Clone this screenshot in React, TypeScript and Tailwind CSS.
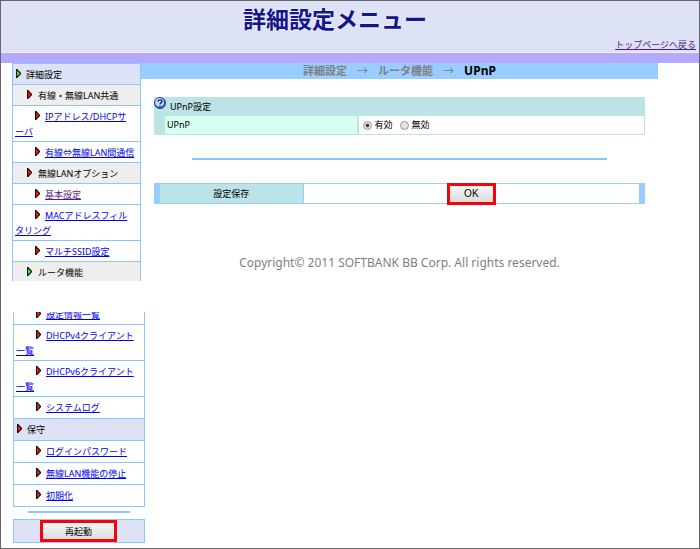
import { useState } from "react";
import clsx from "clsx";

type MenuRow = {
  label: string;
  level: 0 | 1 | 2;
  open?: boolean;
  visited?: boolean;
};

const settingsMenu: MenuRow[] = [
  { label: "詳細設定", level: 0, open: true },
  { label: "有線・無線LAN共通", level: 1 },
  { label: "IPアドレス/DHCPサ\nーバ", level: 2 },
  { label: "有線⇔無線LAN間通信", level: 2 },
  { label: "無線LANオプション", level: 1 },
  { label: "基本設定", level: 2, visited: true },
  { label: "MACアドレスフィル\nタリング", level: 2 },
  { label: "マルチSSID設定", level: 2 },
];

const maintenanceMenu: MenuRow[] = [
  { label: "DHCPv4クライアント\n一覧", level: 2 },
  { label: "DHCPv6クライアント\n一覧", level: 2 },
  { label: "システムログ", level: 2 },
  { label: "保守", level: 0 },
  { label: "ログインパスワード", level: 2 },
  { label: "無線LAN機能の停止", level: 2 },
  { label: "初期化", level: 2 },
];

const Marker = ({ open, level }: { open?: boolean; level: number }) => (
  <svg
    viewBox="0 0 5 9"
    className={clsx(
      "inline-block h-[9px] w-[5px] align-[0px]",
      level === 0 && "ml-px mr-[5px]",
      level === 1 && "ml-3 mr-[6px]",
      level === 2 && "ml-5 mr-[5px]"
    )}
  >
    <path d="M0 0 H1.2 L5 4 V5 L1.2 9 H0 Z" fill="#000" />
    <path d="M1 1.4 L4.2 4.5 L1 7.6 Z" fill={open ? "#1ff01f" : "#ff1010"} />
  </svg>
);

const Row = ({ row, roomy }: { row: MenuRow; roomy?: boolean }) => (
  <li
    className={clsx(
      "whitespace-pre border-b border-[#8cc6ff] px-0.5 pt-[3px] pb-0.5",
      roomy && "min-h-[22px]",
      row.level === 0 && "bg-[#dde2f5]",
      row.level === 1 && "bg-[#eeeeee]"
    )}
  >
    <Marker open={row.open} level={row.level} />
    {row.level === 2 ? (
      <a href="#" className={clsx("underline", row.visited ? "text-[#551a8b]" : "text-[#0000ee]")}>
        {row.label}
      </a>
    ) : (
      row.label
    )}
  </li>
);

const HelpIcon = () => (
  <svg viewBox="0 0 12 12" className="h-3 w-3">
    <circle cx="6" cy="6" r="5.6" fill="#2d55b5" stroke="#1c3c8c" strokeWidth="0.8" />
    <circle cx="5.6" cy="5.4" r="4.4" fill="#c6dcfc" />
    <path d="M4 4.6 C4 2.4 8 2.4 8 4.6 C8 5.9 6 5.9 6 7.3" fill="none" stroke="#0c2470" strokeWidth="1.3" />
    <circle cx="6" cy="9" r="0.8" fill="#0c2470" />
  </svg>
);

const PushButton = ({ children, className }: { children: string; className: string }) => (
  <button
    type="button"
    className={clsx(
      "border-[3px] border-[#f8000c] bg-linear-to-b from-[#f6f6f6] to-[#dcdcdc] text-center text-black",
      className
    )}
  >
    {children}
  </button>
);

export default function App() {
  const [upnp, setUpnp] = useState("on");

  return (
    <div className="min-h-screen border border-[#666] bg-white font-['Noto_Sans','Noto_Sans_CJK_JP',sans-serif] text-[9px] leading-[15px] text-black">
      <header className="border-b border-[#eceffc] bg-[#dde2f5]">
        <h1 className="pr-[30px] text-center text-[23px] leading-9 font-bold text-[#14148c] [text-shadow:0_0_2px_#fff]">
          詳細設定メニュー
        </h1>
        <div className="pr-[3px] text-right">
          <a href="#" className="text-[#551a8b] underline">トップページへ戻る</a>
        </div>
      </header>
      <div className="h-[10px] bg-[#b5a9ff]" />

      <div className="flex">
        <nav className="ml-[11px] w-32 shrink-0 border-t border-l border-[#8cc6ff]">
          <ul>
            {settingsMenu.map((row) => (
              <Row key={row.label} row={row} />
            ))}
            {/* list is cut off here */}
            <li className="h-[19px] overflow-hidden bg-[#eeeeee] px-0.5 pt-[3px]">
              <Marker open level={1} />
              ルータ機能
            </li>
          </ul>
        </nav>

        <main className="min-w-0 flex-1 border-l border-[#8cc6ff]">
          <div className="mr-[41px] flex justify-center bg-[#99ccff] text-[11px] leading-4 font-bold text-[#808080]">
            <span>詳細設定</span>
            <span className="mx-[10px] font-normal">→</span>
            <span>ルータ機能</span>
            <span className="mx-[10px] font-normal">→</span>
            <span className="text-xs leading-4 text-black">UPnP</span>
          </div>

          <form className="mt-[18px] mr-[54px] ml-[13px]">
            <section className="border-r border-b border-[#bce3e5] bg-[#bce3e5]">
              <div className="flex gap-1">
                <HelpIcon />
                <h2 className="pt-[2px] pb-[2px]">UPnP設定</h2>
              </div>
              <div className="ml-[11px] flex gap-0.5 leading-[18px]">
                <div className="w-2/5 bg-[#d6ffee] pl-0.5">UPnP</div>
                <div className="flex flex-1 items-center gap-[7px] bg-white pl-1">
                  {[
                    { value: "on", label: "有効" },
                    { value: "off", label: "無効" },
                  ].map((option) => (
                    <label key={option.value} className="flex items-center gap-[3px]">
                      <input
                        type="radio"
                        name="upnp"
                        value={option.value}
                        checked={upnp === option.value}
                        onChange={() => setUpnp(option.value)}
                        className="h-[9px] w-[9px] appearance-none rounded-full border border-[#999] bg-[#e4e4e4] checked:bg-[radial-gradient(circle,#444_30%,#e4e4e4_45%)]"
                      />
                      {option.label}
                    </label>
                  ))}
                </div>
              </div>
            </section>

            <hr className="mx-[38px] mt-[23px] border-t-2 border-[#8cc6ff]" />

            <div className="mt-[23px] flex h-[21px] border-x-[6px] border-y border-[#99ccff]">
              <div className="w-[30%] border-r border-[#99ccff] bg-[#bce3e5] text-center leading-[19px]">設定保存</div>
              <div className="flex flex-1 items-center justify-center">
                <PushButton className="h-[22px] w-[49px] shrink-0 font-['Liberation_Sans',sans-serif] text-[10px] leading-4">
                  OK
                </PushButton>
              </div>
            </div>
          </form>

          <footer className="mt-[51px] mr-[54px] ml-[13px] text-center text-xs leading-4 text-[#808080]">
            Copyright© 2011 SOFTBANK BB Corp. All rights reserved.
          </footer>
        </main>
      </div>

      <div className="mt-[31px] ml-3 w-[132px]">
        <ul className="border-x border-[#8cc6ff]">
          {/* only the lower edge of this row is visible */}
          <li className="flex h-[13px] items-end overflow-hidden border-b border-[#8cc6ff] px-0.5 pb-0.5">
            <span className="whitespace-pre">
              <Marker level={2} />
              <a href="#" className="text-[#0000ee] underline">設定情報一覧</a>
            </span>
          </li>
          {maintenanceMenu.map((row) => (
            <Row key={row.label} row={row} roomy />
          ))}
        </ul>
        <hr className="mx-[15px] mt-1 border-t-2 border-[#8cc6ff]" />
        <div className="mt-[6px] border border-[#8cc6ff] bg-[#dde2f5] text-center">
          <PushButton className="block h-[22px] w-[77px] ml-[26px]">再起動</PushButton>
        </div>
      </div>
    </div>
  );
}
